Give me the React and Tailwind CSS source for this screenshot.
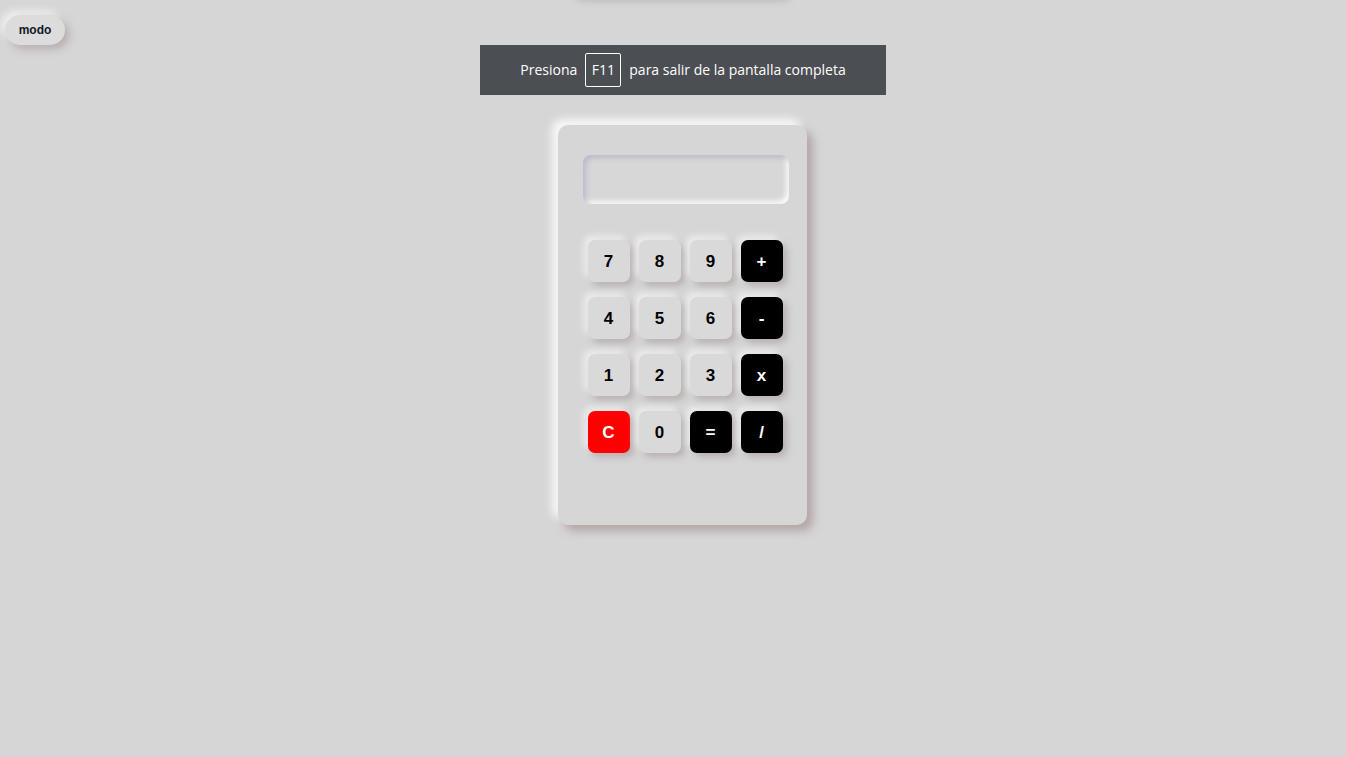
const keys = [
  { label: "7" },
  { label: "8" },
  { label: "9" },
  { label: "+", tone: "dark" },
  { label: "4" },
  { label: "5" },
  { label: "6" },
  { label: "-", tone: "dark" },
  { label: "1" },
  { label: "2" },
  { label: "3" },
  { label: "x", tone: "dark" },
  { label: "C", tone: "red" },
  { label: "0" },
  { label: "=", tone: "dark" },
  { label: "/", tone: "dark" },
];

function Key({ label, tone }) {
  const color =
    tone === "dark"
      ? "bg-black text-white"
      : tone === "red"
      ? "bg-[#ff0000] text-white"
      : "bg-[#d9d9d9] text-black";

  return (
    <button
      className={`w-[42px] h-[42px] rounded-[7px] flex items-center justify-center pt-[1px] text-[17px] font-bold shadow-[4px_4px_7px_rgba(160,145,145,0.55),-4px_-4px_7px_rgba(255,255,255,0.6)] ${color}`}
    >
      {label}
    </button>
  );
}

export default function App() {
  return (
    <div className="relative min-h-[757px] w-full overflow-hidden bg-[#d6d6d6] font-['Liberation_Sans',Arial,sans-serif]">
      {/* faint shadow from something above the top edge */}
      <div className="absolute left-[572px] top-[-40px] w-[218px] h-[40px] rounded-[10px] bg-[#d6d6d6] shadow-[2px_2px_6px_rgba(150,150,150,0.35)]"></div>

      {/* modo toggle */}
      <div className="pt-[15px] pl-[5px]">
        <button className="w-[60px] h-[30px] rounded-full bg-[#dcdcdc] text-[12px] font-bold text-[#111827] shadow-[4px_4px_8px_rgba(160,145,145,0.6),-4px_-4px_8px_rgba(255,255,255,0.7)]">
          modo
        </button>
      </div>

      {/* calculator */}
      <div className="flex justify-center pl-[18px] pt-[80px]">
        <div className="w-[249px] h-[400px] rounded-[10px] bg-[#d6d6d6] pt-[30px] shadow-[6px_6px_9px_rgba(170,150,150,0.75),-6px_-6px_9px_rgba(255,255,255,0.85)]">
          <div className="ml-[25px] w-[206px] h-[49px] rounded-[8px] bg-[#d7d7d7] shadow-[inset_3px_3px_5px_rgba(180,180,200,0.8),inset_-3px_-3px_5px_rgba(255,255,255,0.9)]"></div>

          <div className="mt-[36px] ml-[30px] grid grid-cols-[repeat(4,42px)] gap-x-[9px] gap-y-[15px]">
            {keys.map((k, i) => (
              <Key key={i} label={k.label} tone={k.tone} />
            ))}
          </div>
        </div>
      </div>

      {/* fullscreen notice */}
      <div className="absolute left-[480px] top-[45px] w-[406px] h-[50px] bg-[#4b4e52] flex items-center justify-center gap-[8px] pb-[1px] text-white text-[14px] font-['Open_Sans',sans-serif]">
        <span>Presiona</span>
        <span className="h-[34px] w-[36px] flex items-center justify-center border border-white rounded-[2px]">
          F11
        </span>
        <span>para salir de la pantalla completa</span>
      </div>
    </div>
  );
}
